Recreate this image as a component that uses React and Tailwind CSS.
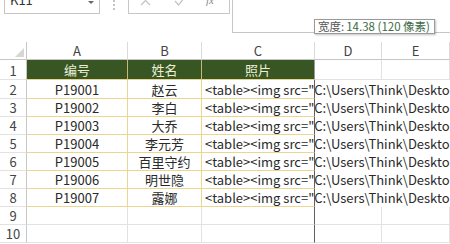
import React from "react";

const GRID = "grid grid-cols-[27px_101px_74px_113px_67px_1fr]";
const FONT = { fontFamily: '"Noto Sans CJK SC", "Noto Sans", sans-serif' };

const data = [
  ["P19001", "赵云"],
  ["P19002", "李白"],
  ["P19003", "大乔"],
  ["P19004", "李元芳"],
  ["P19005", "百里守约"],
  ["P19006", "明世隐"],
  ["P19007", "露娜"],
];

const ctext = '<table><img src="C:\\Users\\Think\\Desktop\\照片\\';

function RowNum({ n }) {
  return (
    <div className="border-r border-b border-r-[#c6c6c6] border-b-[#e2e2e2] flex items-end justify-center text-[13px] leading-[16px] text-[#444]">
      {n}
    </div>
  );
}

export default function App() {
  return (
    <div className="w-[450px] h-[244px] overflow-hidden bg-white relative" style={FONT}>
      {/* formula bar */}
      <div className="h-[42px] flex items-start">
        <div className="ml-[4px] w-[96px] h-[14px] border-x border-b border-[#c6c6c6] flex items-end justify-between pl-[5px] pr-[5px] overflow-hidden">
          <span className="text-[13px] leading-[13px] text-[#333] mb-[7px]">K11</span>
          <span className="self-start mt-[1px] w-0 h-0 border-l-[3px] border-r-[3px] border-t-[3px] border-l-transparent border-r-transparent border-t-[#666]"></span>
        </div>
        <div className="ml-[13px] flex flex-col gap-[2px]">
          <span className="w-[2px] h-[2px] bg-[#c4c4c4]"></span>
          <span className="w-[2px] h-[2px] bg-[#c4c4c4]"></span>
          <span className="w-[2px] h-[2px] bg-[#c4c4c4]"></span>
        </div>
        <div className="ml-[13px] w-[102px] h-[14px] border-x border-b border-[#c6c6c6] flex items-end overflow-hidden">
          <svg className="ml-[11px] mb-[7px]" width="11" height="11" viewBox="0 0 11 11">
            <path d="M1 1 L10 10 M10 1 L1 10" stroke="#c4c4c4" strokeWidth="1.3" fill="none" />
          </svg>
          <svg className="ml-[23px] mb-[6px]" width="12" height="11" viewBox="0 0 12 11">
            <path d="M1 5 L4.5 9 L11 1" stroke="#c4c4c4" strokeWidth="1.3" fill="none" />
          </svg>
          <span className="ml-[20px] mb-[7px] text-[11px] leading-[11px] italic text-[#888]" style={{ fontFamily: '"Liberation Serif", serif' }}>
            fx
          </span>
        </div>
        <div className="ml-[2px] flex-1 h-[34px] -mt-[1px] border-l border-b border-[#c6c6c6]"></div>
      </div>

      {/* column headers */}
      <div className={`${GRID} h-[18px] text-[13px] text-[#444]`}>
        <div className="border-r border-b border-[#c6c6c6] flex items-end justify-end pr-[2px] pb-[2px]">
          <svg width="9" height="9" viewBox="0 0 9 9">
            <path d="M9 0 L9 9 L0 9 Z" fill="#d6d6d6" />
          </svg>
        </div>
        {["A", "B", "C", "D", "E"].map((c) => (
          <div key={c} className="border-r border-b border-r-[#dadada] border-b-[#c6c6c6] flex items-end justify-center leading-[16px]">
            {c}
          </div>
        ))}
      </div>

      {/* row 1 */}
      <div className={`${GRID} h-[20px] text-[13px]`}>
        <RowNum n="1" />
        {["编号", "姓名", "照片"].map((t, i) => (
          <div
            key={t}
            className={`bg-[#375623] border-b border-r border-b-[#ead38c] ${i === 2 ? "border-r-[#9a9a9a]" : "border-r-[#c9b872]"} flex items-end justify-center leading-[16px] pb-[1px] text-[#eeeed8]`}
          >
            {t}
          </div>
        ))}
        <div className="border-r border-b border-[#e2e2e2]"></div>
        <div className="border-r border-b border-[#e2e2e2]"></div>
      </div>

      {/* data rows */}
      {data.map(([id, name], idx) => (
        <div key={id} className={`${GRID} ${idx === 0 ? "h-[19px]" : "h-[18px]"} text-[13px] text-[#2a2a2a]`}>
          <RowNum n={idx + 2} />
          <div className="border-r border-b border-[#ebd58f] flex items-end justify-center leading-[16px]">{id}</div>
          <div className="border-r border-b border-[#ebd58f] flex items-end justify-center leading-[16px]">{name}</div>
          <div className="relative z-10 border-r border-b border-r-[#5f5f5f] border-b-[#ebd58f] flex items-end pl-[3px] leading-[16px] whitespace-nowrap overflow-visible">
            {ctext}
          </div>
          <div></div>
          <div></div>
        </div>
      ))}

      {/* empty rows */}
      {[9, 10].map((n) => (
        <div key={n} className={`${GRID} h-[18px]`}>
          <RowNum n={n} />
          <div className="border-r border-b border-[#e2e2e2]"></div>
          <div className="border-r border-b border-[#e2e2e2]"></div>
          <div className="border-r border-b border-r-[#5f5f5f] border-b-[#e2e2e2]"></div>
          <div className="border-r border-b border-[#e2e2e2]"></div>
          <div className="border-r border-b border-[#e2e2e2]"></div>
        </div>
      ))}

      {/* width tooltip */}
      <div className="absolute left-[314px] top-[19px] w-[121px] h-[15px] bg-white border border-[#9a9a9a] shadow-[1px_1px_2px_rgba(0,0,0,0.25)] flex items-center pl-[3px] text-[11.5px] leading-[13px] whitespace-nowrap text-[#3d6a45]">
        <span className="text-[#555]">宽度:</span>
        <span className="ml-[2px]">14.38 (120 像素)</span>
      </div>
    </div>
  );
}
